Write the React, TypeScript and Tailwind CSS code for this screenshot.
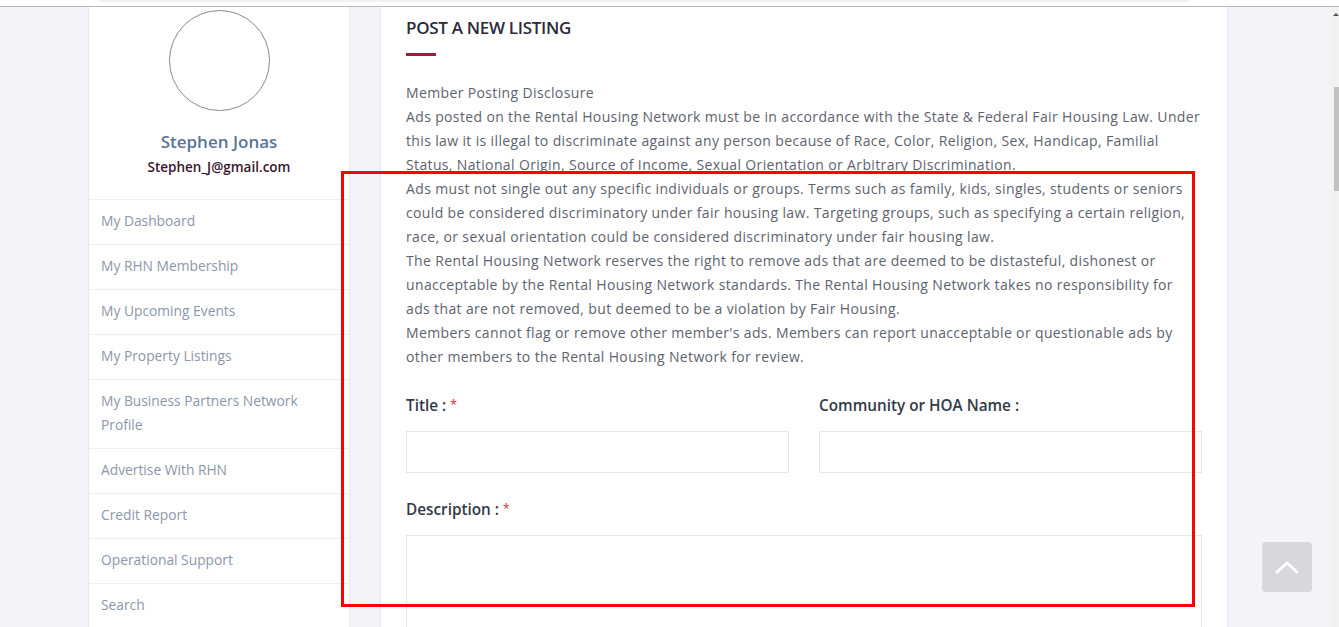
import React from "react";

const menu = [
  ["My Dashboard"],
  ["My RHN Membership"],
  ["My Upcoming Events"],
  ["My Property Listings"],
  ["My Business Partners Network", "Profile"],
  ["Advertise With RHN"],
  ["Credit Report"],
  ["Operational Support"],
  ["Search"],
];

const lines = [
  "Member Posting Disclosure",
  "Ads posted on the Rental Housing Network must be in accordance with the State & Federal Fair Housing Law. Under",
  "this law it is illegal to discriminate against any person because of Race, Color, Religion, Sex, Handicap, Familial",
  "Status, National Origin, Source of Income, Sexual Orientation or Arbitrary Discrimination.",
  "Ads must not single out any specific individuals or groups. Terms such as family, kids, singles, students or seniors",
  "could be considered discriminatory under fair housing law. Targeting groups, such as specifying a certain religion,",
  "race, or sexual orientation could be considered discriminatory under fair housing law.",
  "The Rental Housing Network reserves the right to remove ads that are deemed to be distasteful, dishonest or",
  "unacceptable by the Rental Housing Network standards. The Rental Housing Network takes no responsibility for",
  "ads that are not removed, but deemed to be a violation by Fair Housing.",
  "Members cannot flag or remove other member's ads. Members can report unacceptable or questionable ads by",
  "other members to the Rental Housing Network for review.",
];

export default function App() {
  return (
    <div
      className="relative w-[1339px] h-[627px] overflow-hidden bg-[#f3f3f9] flex flex-col"
      style={{ fontFamily: "'Open Sans', 'Liberation Sans', sans-serif" }}
    >
      {/* browser chrome strip */}
      <div className="h-[7px] shrink-0 bg-white border-b border-[#b9b9b9] relative">
        <div className="absolute left-[97px] top-[-6px] w-[1092px] h-[8px] rounded-[6px] bg-[#f1f1f1]" />
      </div>

      <div className="flex flex-1 min-h-0">
        <div className="flex flex-1 min-w-0 pl-[88px] gap-[30px] items-start">
          {/* sidebar */}
          <aside className="w-[262px] shrink-0 bg-white border-x border-[#e6e6f4] flex flex-col">
            <div className="flex flex-col items-center pt-[3px] pb-[22px]">
              <div className="w-[101px] h-[101px] rounded-full border border-[#8a8a8a]" />
              <div className="mt-[19px] text-[17px] leading-[24px] font-semibold text-[#5a7596]">
                Stephen Jonas
              </div>
              <div className="mt-[3px] text-[13.5px] leading-[20px] font-semibold text-[#3a1530]">
                Stephen_J@gmail.com
              </div>
            </div>
            {menu.map((m, i) => (
              <div
                key={i}
                className="border-t border-[#eeeef6] px-[12px] pt-[9px] pb-[11px] text-[13.8px] leading-[24px] text-[#8b97aa]"
              >
                {m.map((t, j) => (
                  <div key={j} className="whitespace-nowrap">{t}</div>
                ))}
              </div>
            ))}
          </aside>

          {/* main card */}
          <main className="w-[848px] h-[640px] shrink-0 bg-white border-x border-[#e6e6f4] px-[25px] pt-[9px]">
            <h1 className="text-[17px] leading-[24px] font-semibold text-[#2b2b3b] tracking-[-0.3px]">
              POST A NEW LISTING
            </h1>
            <div className="mt-[13px] w-[30px] h-[3px] bg-[#9b1c3c]" />
            <div className="mt-[25px] text-[14px] leading-[24px] text-[#5d636e] tracking-[0.36px]">
              {lines.map((l, i) => (
                <div key={i} className="whitespace-nowrap">{l}</div>
              ))}
            </div>
            <div className="mt-[24px] grid grid-cols-2 gap-x-[30px]">
              <div>
                <label className="block text-[15.3px] leading-[24px] font-semibold text-[#323a48]">
                  Title : <span className="text-[#e8454a] text-[12px] align-top">*</span>
                </label>
                <div className="mt-[14px] h-[42px] border border-[#e5e5f2]" />
              </div>
              <div>
                <label className="block text-[15.3px] leading-[24px] font-semibold text-[#323a48]">
                  Community or HOA Name :
                </label>
                <div className="mt-[14px] h-[42px] border border-[#e5e5f2]" />
              </div>
            </div>
            <label className="mt-[24px] block text-[15.3px] leading-[24px] font-semibold text-[#323a48]">
              Description : <span className="text-[#e8454a] text-[12px] align-top">*</span>
            </label>
            <div className="mt-[14px] h-[140px] border border-[#e5e5f2]" />
          </main>
        </div>

        {/* scrollbar */}
        <div className="w-[7px] shrink-0 bg-[#f1f1f1] relative">
          <div className="absolute left-[1px] top-[6px] w-0 h-0 border-x-[3px] border-x-transparent border-b-[3px] border-b-[#505050]" />
          <div className="absolute left-[2px] top-[80px] w-[5px] h-[104px] bg-[#c1c1c1]" />
        </div>
      </div>

      {/* scroll to top button */}
      <div className="absolute left-[1262px] top-[542px] w-[50px] h-[50px] rounded-[4px] bg-[#d7d7dc] flex items-center justify-center">
        <svg width="24" height="14" viewBox="0 0 24 14" fill="none">
          <path d="M2 12 L12 3 L22 12" stroke="white" strokeWidth="3" strokeLinecap="round" strokeLinejoin="round" />
        </svg>
      </div>

      {/* red annotation box */}
      <div className="absolute left-[341px] top-[171px] w-[854px] h-[436px] border-[3px] border-[#ff0000] pointer-events-none" />
    </div>
  );
}
